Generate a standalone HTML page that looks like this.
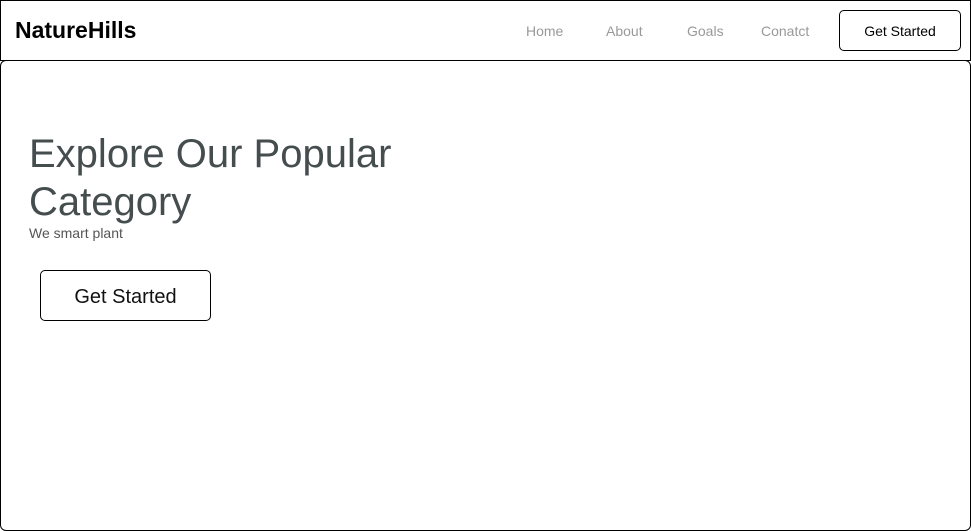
<!DOCTYPE html>
<html><head><style>
*{margin:0;padding:0;box-sizing:border-box}
body{width:971px;height:531px;background:#fff;font-family:"Liberation Sans",Arial,sans-serif;position:relative;overflow:hidden}
.hdr{position:absolute;left:0;top:0;width:971px;height:61px;border:1px solid #000}
.logo{position:absolute;left:15px;top:17px;font-size:23px;font-weight:bold;color:#000}
.nav{position:absolute;top:23px;font-size:14px;color:#999}
.btn1{position:absolute;left:839px;top:10px;width:122px;height:41px;border:1px solid #000;border-radius:5px;font-size:14px;text-align:center;line-height:41px;color:#000}
.main{position:absolute;left:0;top:60px;width:971px;height:471px;border:1px solid #000;border-radius:6px}
h1{position:absolute;left:29px;top:130px;font-size:40px;line-height:48px;font-weight:normal;color:#454d4f}
.sub{position:absolute;left:29px;top:225px;font-size:14px;color:#555}
.btn2{position:absolute;left:40px;top:270px;width:171px;height:51px;border:1px solid #000;border-radius:5px;font-size:20px;text-align:center;line-height:52px;color:#111}
</style></head><body>
<div class="hdr"></div>
<div class="logo">NatureHills</div>
<div class="nav" style="left:526px">Home</div>
<div class="nav" style="left:606px">About</div>
<div class="nav" style="left:687px">Goals</div>
<div class="nav" style="left:761px">Conatct</div>
<div class="btn1">Get Started</div>
<div class="main"></div>
<h1>Explore Our Popular<br>Category</h1>
<div class="sub">We smart plant</div>
<div class="btn2">Get Started</div>
</body></html>
